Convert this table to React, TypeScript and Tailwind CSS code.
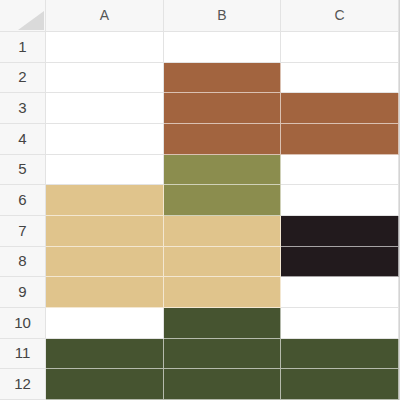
const BROWN = 'bg-[#a2643f]';
const OLIVE = 'bg-[#8b8d4e]';
const TAN = 'bg-[#e0c48c]';
const BLACK = 'bg-[#221a1d]';
const GREEN = 'bg-[#465430]';

// fills per row: [A, B, C]
const rows: (string | null)[][] = [
  [null, null, null],
  [null, BROWN, null],
  [null, BROWN, BROWN],
  [null, BROWN, BROWN],
  [null, OLIVE, null],
  [TAN, OLIVE, null],
  [TAN, TAN, BLACK],
  [TAN, TAN, BLACK],
  [TAN, TAN, null],
  [null, GREEN, null],
  [GREEN, GREEN, GREEN],
  [GREEN, GREEN, GREEN],
];

export default function App() {
  return (
    <div
      className="w-[400px] h-[400px] bg-white grid grid-cols-[46px_repeat(3,1fr)] grid-rows-[32px_repeat(12,1fr)] border-r border-[#d4d4d4] overflow-hidden"
      style={{ fontFamily: '"Liberation Sans", Arial, sans-serif' }}
    >
      {/* corner */}
      <div className="relative bg-[#f7f7f7] border-r border-b border-[#e3e3e3]">
        <svg className="absolute left-[18px] top-[11px]" width="26" height="19" viewBox="0 0 26 19">
          <polygon points="26,0 26,19 0,19" fill="#dadada" />
        </svg>
      </div>
      {['A', 'B', 'C'].map((c) => (
        <div
          key={c}
          className="flex items-center justify-center bg-[#f7f7f7] border-r border-b border-[#e3e3e3] text-[14px] text-[#555]"
        >
          {c}
        </div>
      ))}

      {rows.map((cells, i) => (
        <div key={i} className="contents">
          <div className="flex items-center justify-center bg-[#f7f7f7] border-r border-b border-[#e3e3e3] text-[15px] text-[#444]">
            {i + 1}
          </div>
          {cells.map((fill, j) => (
            <div
              key={j}
              className={
                fill
                  ? `${fill} border-r border-b border-white/60`
                  : 'bg-white border-r border-b border-[#e3e3e3]'
              }
            />
          ))}
        </div>
      ))}
    </div>
  );
}
